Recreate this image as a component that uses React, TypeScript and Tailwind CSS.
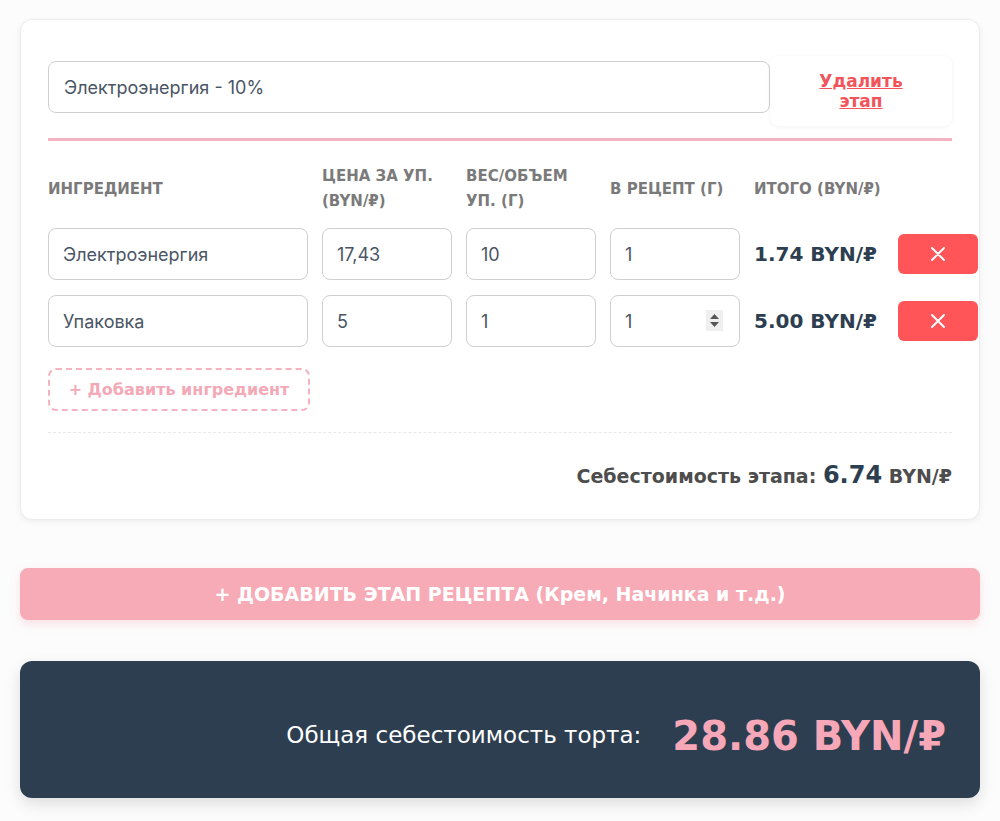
import { useState } from "react";

type Row = {
  name: string;
  price: string;
  weight: string;
  amount: string;
  total: string;
};

const initialRows: Row[] = [
  { name: "Электроэнергия", price: "17,43", weight: "10", amount: "1", total: "1.74" },
  { name: "Упаковка", price: "5", weight: "1", amount: "1", total: "5.00" },
];

const inputClass =
  "h-[52px] w-full rounded-lg border-[1.5px] border-[#cfcfcf] bg-white px-[14px] text-[18px] text-[#4a5565] outline-none [font-family:Inter,'Noto_Sans',sans-serif]";

const gridCols = "grid grid-cols-[260px_130px_130px_130px_130px_80px] gap-x-[14px]";

const CloseIcon = () => (
  <svg width="16" height="16" viewBox="0 0 16 16" fill="none">
    <path d="M2 2L14 14M14 2L2 14" stroke="white" strokeWidth="2" strokeLinecap="round" />
  </svg>
);

const App = () => {
  const [stageName, setStageName] = useState("Электроэнергия - 10%");
  const [rows, setRows] = useState(initialRows);

  const update = (i: number, key: keyof Row, value: string) => {
    setRows(rows.map((r, idx) => (idx === i ? { ...r, [key]: value } : r)));
  };

  return (
    <div className="min-h-screen bg-[#fcfcfc] px-5 pt-[19px] pb-5 [font-family:'DejaVu_Sans',Verdana,sans-serif]">
      <div className="rounded-xl border border-[#ececec] bg-white px-[27px] pt-9 pb-[30px] shadow-[0_2px_6px_rgba(0,0,0,0.06)]">
        <div className="flex items-start border-b-[3px] border-[#f5b3bf] pb-[12px]">
          <input
            value={stageName}
            onChange={(e) => setStageName(e.target.value)}
            className={inputClass + " mt-[5px] flex-1 px-[15px]"}
          />
          <button className="h-[70px] w-[182px] rounded-lg bg-white px-[36px] text-[17px] font-bold leading-[20px] text-[#f2545b] underline shadow-[0_1px_4px_rgba(0,0,0,0.06)]">
            Удалить этап
          </button>
        </div>

        <div className={gridCols + " mt-[23px] items-center text-[15px] font-bold uppercase leading-[25px] text-[#7a7a7a]"}>
          <div>Ингредиент</div>
          <div>Цена за уп. (BYN/₽)</div>
          <div>Вес/объем уп. (г)</div>
          <div>В рецепт (г)</div>
          <div className="whitespace-nowrap">Итого (BYN/₽)</div>
          <div />
        </div>

        <div className="mt-[14px] flex flex-col gap-[15px]">
          {rows.map((r, i) => (
            <div key={i} className={gridCols + " items-center"}>
              <input value={r.name} onChange={(e) => update(i, "name", e.target.value)} className={inputClass} />
              <input value={r.price} onChange={(e) => update(i, "price", e.target.value)} className={inputClass} />
              <input value={r.weight} onChange={(e) => update(i, "weight", e.target.value)} className={inputClass} />
              <div className="relative">
                <input value={r.amount} onChange={(e) => update(i, "amount", e.target.value)} className={inputClass} />
                {i === 1 && (
                  <div className="absolute right-[17px] top-[15px] flex h-[21px] w-[17px] flex-col items-center justify-center gap-[3px] bg-[#efefef]">
                    <svg width="9" height="5" viewBox="0 0 9 5">
                      <path d="M4.5 0L9 5H0z" fill="#555" />
                    </svg>
                    <svg width="9" height="5" viewBox="0 0 9 5">
                      <path d="M0 0H9L4.5 5z" fill="#555" />
                    </svg>
                  </div>
                )}
              </div>
              <div className="whitespace-nowrap text-[20px] font-bold text-[#2c3e50]">{r.total} BYN/₽</div>
              <button className="flex h-[40px] w-[80px] items-center justify-center rounded-md bg-[#ff5558]">
                <CloseIcon />
              </button>
            </div>
          ))}
        </div>

        <button className="mt-[21px] h-[43px] w-[262px] rounded-lg border-2 border-dashed border-[#f5b3bf] text-[16px] font-bold text-[#f4a9b7]">
          + Добавить ингредиент
        </button>

        <div className="mt-[21px] border-t border-dashed border-[#e8e8e8] pt-[29px] text-right text-[19px] font-bold leading-[26px] text-[#4d4d4d]">
          Себестоимость этапа: <span className="text-[24px] text-[#2c3e50]">6.74</span> BYN/₽
        </div>
      </div>

      <button className="mt-[48px] h-[52px] w-full rounded-lg bg-[#f7abb6] text-[19px] font-bold text-white shadow-[0_4px_10px_rgba(247,171,182,0.35)]">
        + ДОБАВИТЬ ЭТАП РЕЦЕПТА (Крем, Начинка и т.д.)
      </button>

      <div className="mt-[41px] flex h-[137px] items-center justify-end gap-[31px] rounded-xl bg-[#2d3e50] px-[34px] pt-[12px] shadow-[0_6px_16px_rgba(0,0,0,0.12)]">
        <span className="text-[23px] text-white">Общая себестоимость торта:</span>
        <span className="text-[40px] font-bold text-[#f7a8b8]">28.86 BYN/₽</span>
      </div>
    </div>
  );
};

export default App;
